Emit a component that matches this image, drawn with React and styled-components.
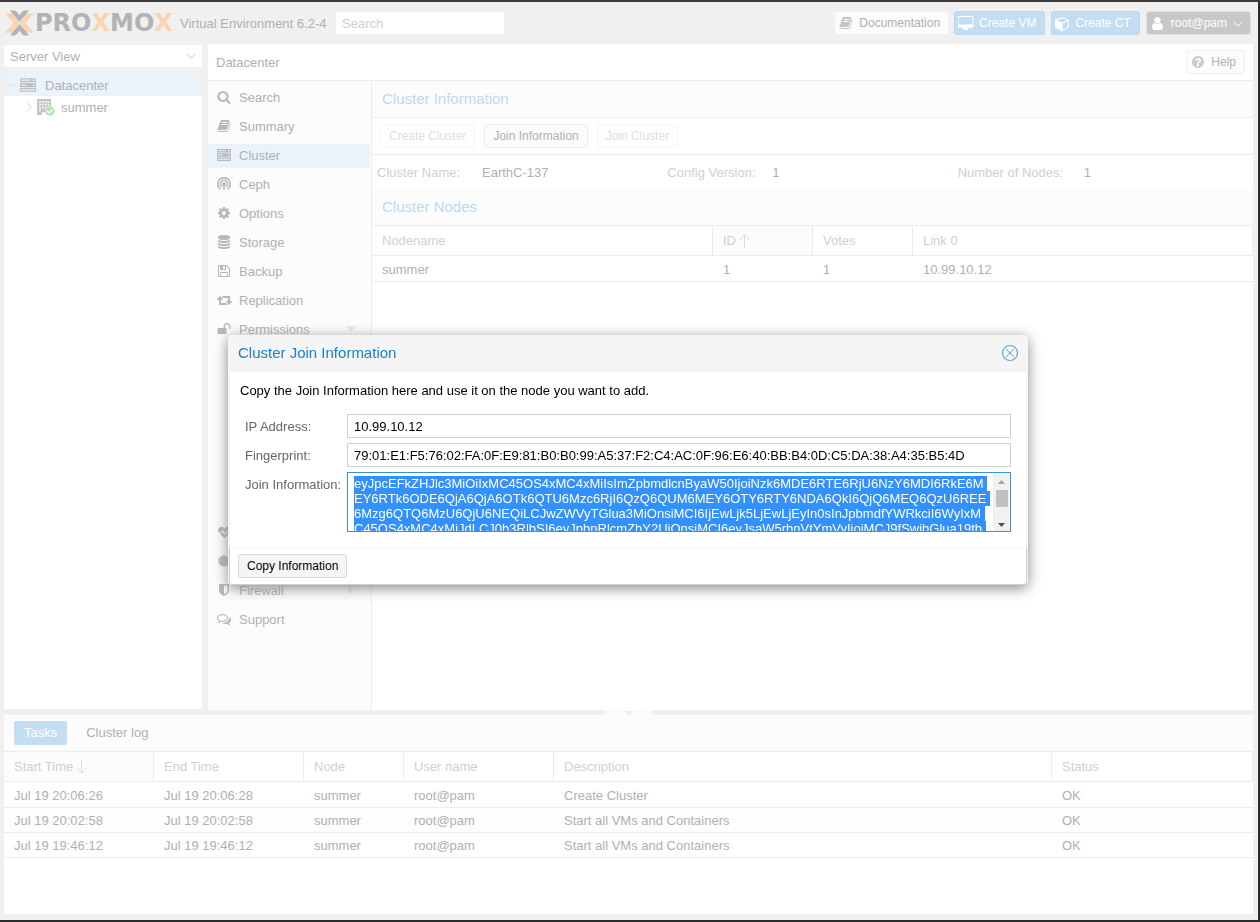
import React, { useEffect, useRef } from "react";
import styled, { createGlobalStyle } from "styled-components";
import { FaCertificate, FaCheckCircle, FaHeartbeat } from "react-icons/fa";

const paths = {
  search:
    "M1216 832q0-185-131.500-316.500t-316.500-131.500-316.500 131.500-131.500 316.500 131.500 316.500 316.500 131.500 316.500-131.500 131.500-316.500zM1728 1664q0 52-38 90t-90 38q-54 0-90-38l-343-342q-179 124-399 124-143 0-273.500-55.500t-225-150-150-225-55.500-273.500 55.500-273.500 150-225 225-150 273.500-55.500 273.500 55.500 225 150 150 225 55.500 273.500q0 220-124 399l343 343q37 37 37 90z",
  book: "M1703 478q40 57 18 129l-275 906q-19 64-76.500 107.500t-122.500 43.500h-923q-77 0-148.500-53.500t-99.500-131.500q-24-67-2-127 0-4 3-27t4-37q1-8-3-21.500t-3-19.500q2-11 8-21t16.500-23.500 16.500-23.500q23-38 45-91.500t30-91.500q3-10 .5-30t-.5-28q3-11 17-28t17-23q21-36 42-92t25-90q1-9-2.500-32t.5-28q4-13 22-30.500t22-22.500q19-26 42.500-84.500t27.500-96.500q1-8-3-25.500t-2-26.500q2-8 9-18t18-23 17-21q8-12 16.500-30.500t15-35 16-36 19.500-32 26.500-23.500 36-11.500 47.500 5.500l-1 3q38-9 51-9h761q74 0 114 56t18 130l-274 906q-36 119-71.500 153.500t-128.500 34.500h-869q-27 0-38 15-11 16-1 43 24 70 144 70h923q29 0 56-15.500t35-41.500l300-987q7-22 5-57 38 15 59 43zm-1064 2q-4 13 2 22.500t20 9.500h608q13 0 25.500-9.500t16.500-22.500l21-64q4-13-2-22.500t-20-9.500h-608q-13 0-25.500 9.500t-16.500 22.500zm-83 256q-4 13 2 22.500t20 9.500h608q13 0 25.500-9.500t16.500-22.500l21-64q4-13-2-22.500t-20-9.500h-608q-13 0-25.500 9.500t-16.500 22.500z",
  server:
    "M0 128h1792v448h-1792zM128 288v128h1024v-128zM1440 256v192h192v-192zM0 672h1792v448h-1792zM128 832v128h640v-128zM1440 800v192h192v-192zM0 1216h1792v448h-1792zM128 1376v128h1280v-128zM1440 1344v192h192v-192z",
  ceph: "M896 0a896 896 0 0 0-500 1640l100-175a690 690 0 1 1 800 0l100 175a896 896 0 0 0-500-1640zM896 350a546 546 0 0 0-330 980l100-165a350 350 0 1 1 460 0l100 165a546 546 0 0 0-330-980zM896 660a240 240 0 0 0-100 458v546h200v-546a240 240 0 0 0-100-458z",
  cog: "M1152 896q0-106-75-181t-181-75-181 75-75 181 75 181 181 75 181-75 75-181zm512-109v222q0 12-8 23t-20 13l-185 28q-19 54-39 91 35 50 107 138 10 12 10 25t-9 23q-27 37-99 108t-94 71q-12 0-26-9l-138-108q-44 23-91 38-16 136-29 186-7 28-36 28h-222q-14 0-24.500-8.500t-11.500-21.500l-28-184q-49-16-90-37l-141 107q-10 9-25 9-14 0-25-11-126-114-165-168-7-10-7-23 0-12 8-23 15-21 51-66.500t54-70.500q-27-50-41-99l-183-27q-13-2-21-12.500t-8-23.500v-222q0-12 8-23t19-13l186-28q14-46 39-92-40-57-107-138-10-12-10-24 0-10 9-23 26-36 98.500-107.500t94.500-71.500q13 0 26 10l138 107q44-23 91-38 16-136 29-186 7-28 36-28h222q14 0 24.500 8.500t11.500 21.500l28 184q49 16 90 37l142-107q9-9 24-9 13 0 25 10 129 119 165 170 7 8 7 22 0 12-8 23-15 21-51 66.500t-54 70.500q26 50 41 98l183 28q13 2 21 12.500t8 23.500z",
  database:
    "M896 768q237 0 443-43t325-127v170q0 69-103 128t-280 93.500-385 34.500-385-34.500-280-93.500-103-128v-170q119 84 325 127t443 43zm0 768q237 0 443-43t325-127v170q0 69-103 128t-280 93.500-385 34.500-385-34.500-280-93.500-103-128v-170q119 84 325 127t443 43zm0-384q237 0 443-43t325-127v170q0 69-103 128t-280 93.500-385 34.500-385-34.500-280-93.500-103-128v-170q119 84 325 127t443 43zm0-1152q208 0 385 34.500t280 93.500 103 128v128q0 69-103 128t-280 93.500-385 34.500-385-34.500-280-93.500-103-128v-128q0-69 103-128t280-93.500 385-34.500z",
  floppy:
    "M512 1536h768v-384h-768v384zm896 0h128v-896q0-14-10-38.500t-20-34.500l-281-281q-10-10-34-20t-39-10v416q0 40-28 68t-68 28h-576q-40 0-68-28t-28-68v-416h-128v1280h128v-416q0-40 28-68t68-28h832q40 0 68 28t28 68v416zm-384-928v-320q0-13-9.500-22.500t-22.500-9.500h-192q-13 0-22.500 9.500t-9.500 22.500v320q0 13 9.500 22.500t22.500 9.500h192q13 0 22.500-9.500t9.500-22.500zm640 32v928q0 40-28 68t-68 28h-1344q-40 0-68-28t-28-68v-1344q0-40 28-68t68-28h928q40 0 88 20t76 48l280 280q28 28 48 76t20 88z",
  retweet:
    "M1280 1504q0 13-9.500 22.500t-22.500 9.500h-960q-8 0-13.500-2t-9-7-5.500-8-3-11.500-1-11.500v-600h-192q-26 0-45-19t-19-45q0-24 15-41l320-384q19-22 49-22t49 22l320 384q15 17 15 41 0 26-19 45t-45 19h-192v384h576q16 0 25 11l160 192q7 10 7 21zm640-416q0 24-15 41l-320 384q-20 23-49 23t-49-23l-320-384q-15-17-15-41 0-26 19-45t45-19h192v-384h-576q-16 0-25-12l-160-192q-7-9-7-20 0-13 9.500-22.500t22.500-9.500h960q8 0 13.500 2t9 7 5.500 8 3 11.500 1 11.500v600h192q26 0 45 19t19 45z",
  unlock:
    "M1728 576v256q0 26-19 45t-45 19h-64q-26 0-45-19t-19-45v-256q0-106-75-181t-181-75-181 75-75 181v192h96q40 0 68 28t28 68v576q0 40-28 68t-68 28h-960q-40 0-68-28t-28-68v-576q0-40 28-68t68-28h672v-192q0-185 131.500-316.500t316.500-131.500 316.500 131.500 131.500 316.500z",
  shield:
    "M1344 960v-640h-448v1137q119-63 213-137 235-184 235-360zm192-768v768q0 86-33.500 170.500t-83 150-118 127.500-126.500 103-121 77.500-89.500 49.500-42.500 20q-12 6-26 6t-26-6q-16-7-42.500-20t-89.500-49.500-121-77.500-126.500-103-118-127.500-83-150-33.500-170.500v-768q0-26 19-45t45-19h1152q26 0 45 19t19 45z",
  comments:
    "M704 384q-153 0-286 52t-211.500 141-78.500 191q0 82 53 158t149 132l97 56-35 84q34-20 62-39l44-31 53 10q78 14 153 14 153 0 286-52t211.500-141 78.500-191-78.500-191-211.500-141-286-52zm0-128q191 0 353.500 68.500t256.500 186.500 94 257-94 257-256.500 186.500-353.500 68.500q-86 0-176-16-124 88-278 128-36 9-86 16h-3q-11 0-20.500-8t-11.500-21q-1-3-1-6.500t.5-6.500 2-6l2.500-5t3.500-5.500 4-5 4.500-5 4-4.500q5-6 23-25t26-29.500 22.500-29 25-38.500 20.500-44q-124-72-195-177t-71-224q0-139 94-257t256.500-186.500 353.500-68.500zm822 1169q10 24 20.500 44t25 38.500 22.500 29 26 29.500 23 25q1 1 4 4.500t4.500 5 4 5 3.500 5.500l2.500 5t2 6 .5 6.500-1 6.500q-3 14-13 22t-22 7q-50-7-86-16-154-40-278-128-90 16-176 16-271 0-472-132 58 4 88 4 161 0 309-45t264-129q125-92 192-212t67-254q0-77-23-152 129 71 204 178t75 230q0 120-71 224.500t-195 176.500z",
  desktop:
    "M1728 992v-832q0-13-9.500-22.500t-22.500-9.500h-1600q-13 0-22.500 9.500t-9.500 22.500v832q0 13 9.500 22.500t22.500 9.500h1600q13 0 22.500-9.500t9.500-22.500zm128-832v1088q0 66-47 113t-113 47h-544q0 37 16 77.500t32 71 16 43.500q0 26-19 45t-45 19h-512q-26 0-45-19t-19-45q0-14 16-44t32-70 16-78h-544q-66 0-113-47t-47-113v-1088q0-66 47-113t113-47h1600q66 0 113 47t47 113z",
  cube: "M896 1629l640-349v-636l-640 233v752zm-64-865l698-254-698-254-698 254zm832-252v768q0 35-18 65t-49 47l-704 384q-28 16-61 16t-61-16l-704-384q-31-17-49-47t-18-65v-768q0-40 23-73t61-47l704-256q22-8 44-8t44 8l704 256q38 14 61 47t23 73z",
  user: "M1536 1399q0 109-62.500 187t-150.500 78h-854q-88 0-150.500-78t-62.500-187q0-85 8.500-160.500t31.500-152 58.500-131 94-89 134.500-34.500q131 128 313 128t313-128q76 0 134.500 34.500t94 89 58.500 131 31.500 152 8.500 160.500zm-256-887q0 159-112.500 271.500t-271.500 112.500-271.500-112.500-112.500-271.500 112.500-271.500 271.500-112.500 271.500 112.500 112.500 271.500z",
  question:
    "M1024 1376v-192q0-14-9-23t-23-9h-192q-14 0-23 9t-9 23v192q0 14 9 23t23 9h192q14 0 23-9t9-23zm256-672q0-88-55.500-163t-138.500-116-170-41q-243 0-371 213-15 24 8 42l132 100q7 6 19 6 16 0 25-12 53-68 86-92 34-24 86-24 48 0 85.500 26t37.500 59q0 38-20 61t-68 45q-63 28-115.500 86.500t-52.500 125.500v36q0 14 9 23t23 9h192q14 0 23-9t9-23q0-19 21.500-49.500t54.500-49.500q32-18 49-28.500t46-35 44.500-48 28-60.500 12.500-81zm384 192q0 209-103 385.500t-279.500 279.500-385.500 103-385.500-103-279.500-279.500-103-385.500 103-385.500 279.500-279.500 385.500-103 385.500 103 279.500 279.500 103 385.500z",
  building:
    "M128 0h1536v1792h-512v-320h-512v320h-512zM352 224v192h192v-192zM672 224v192h192v-192zM992 224v192h192v-192zM1312 224v192h160v-192zM352 544v192h192v-192zM672 544v192h192v-192zM992 544v192h192v-192zM1312 544v192h160v-192zM352 864v192h192v-192zM672 864v192h192v-192zM992 864v192h192v-192zM1312 864v192h160v-192zM352 1184v192h192v-192zM1312 1184v192h160v-192z",
};

const wide = ["retweet", "desktop"];

function Icon({ name, size = 14 }) {
  return (
    <svg
      width={wide.includes(name) ? size + 1 : size}
      height={size}
      viewBox={wide.includes(name) ? "0 0 1920 1792" : "0 0 1792 1792"}
      fill="currentColor"
      fillRule="evenodd"
      aria-hidden="true"
    >
      <path d={paths[name]} />
    </svg>
  );
}

function Line({ d, width = 10, height = 10 }) {
  return (
    <svg
      width={width}
      height={height}
      viewBox={`0 0 ${width} ${height}`}
      fill="none"
      stroke="currentColor"
      aria-hidden="true"
    >
      <path d={d} />
    </svg>
  );
}

const menu = [
  { icon: "search", label: "Search" },
  { icon: "book", label: "Summary" },
  { icon: "server", label: "Cluster", active: true },
  { icon: "ceph", label: "Ceph" },
  { icon: "cog", label: "Options" },
  { icon: "database", label: "Storage" },
  { icon: "floppy", label: "Backup" },
  { icon: "retweet", label: "Replication" },
  { icon: "unlock", label: "Permissions", arrow: "M0 2h10l-5 6z" },
];

// entries below the expanded Permissions group
const lowerMenu = [
  { icon: "heart" },
  { icon: "certificate" },
  { icon: "shield", label: "Firewall", arrow: "M2 0l6 5l-6 5z" },
  { icon: "comments", label: "Support" },
];

const tasks = [
  ["Jul 19 20:06:26", "Jul 19 20:06:28", "summer", "root@pam", "Create Cluster", "OK"],
  ["Jul 19 20:02:58", "Jul 19 20:02:58", "summer", "root@pam", "Start all VMs and Containers", "OK"],
  ["Jul 19 19:46:12", "Jul 19 19:46:12", "summer", "root@pam", "Start all VMs and Containers", "OK"],
];

const joinInfo = [
  "eyJpcEFkZHJlc3MiOiIxMC45OS4xMC4xMiIsImZpbmdlcnByaW50IjoiNzk6MDE6RTE6RjU6NzY6MDI6RkE6M",
  "EY6RTk6ODE6QjA6QjA6OTk6QTU6Mzc6RjI6QzQ6QUM6MEY6OTY6RTY6NDA6QkI6QjQ6MEQ6QzU6REE",
  "6Mzg6QTQ6MzU6QjU6NEQiLCJwZWVyTGlua3MiOnsiMCI6IjEwLjk5LjEwLjEyIn0sInJpbmdfYWRkciI6WyIxM",
  "C45OS4xMC4xMiJdLCJ0b3RlbSI6eyJpbnRlcmZhY2UiOnsiMCI6eyJsaW5rbnVtYmVyIjoiMCJ9fSwibGlua19tb",
  "2RlIjoicGFzc2l2ZSJ9fQ==",
].join("\n");

function MenuIcon({ name }) {
  if (name === "heart") return <FaHeartbeat size={13} />;
  if (name === "certificate") return <FaCertificate size={12} />;
  return <Icon name={name} />;
}

function MenuEntry({ item }) {
  return (
    <MenuItem href="#menu" $active={item.active}>
      <IconSlot>
        <MenuIcon name={item.icon} />
      </IconSlot>
      <span>{item.label}</span>
      {item.arrow && (
        <svg width="10" height="10" fill="#ebebeb">
          <path d={item.arrow} />
        </svg>
      )}
    </MenuItem>
  );
}

function JoinDialog() {
  const area = useRef(null);

  useEffect(() => {
    area.current.focus({ preventScroll: true });
    area.current.select();
    area.current.scrollTop = 0;
  }, []);

  return (
    <Dialog role="dialog" aria-labelledby="join-title">
      <DialogHead>
        <DialogTitle id="join-title">Cluster Join Information</DialogTitle>
        <Close aria-label="Close">
          <svg width="18" height="18" viewBox="0 0 18 18" fill="none" stroke="#62a6d9">
            <circle cx="9" cy="9" r="7.5" strokeWidth="1.2" />
            <path d="M5 5l8 8M13 5l-8 8" />
          </svg>
        </Close>
      </DialogHead>
      <DialogBody>
        <p>Copy the Join Information here and use it on the node you want to add.</p>
        <Field>
          <label htmlFor="ip">IP Address:</label>
          <TextBox id="ip" readOnly value="10.99.10.12" />
        </Field>
        <Field>
          <label htmlFor="fp">Fingerprint:</label>
          <TextBox
            id="fp"
            readOnly
            value="79:01:E1:F5:76:02:FA:0F:E9:81:B0:B0:99:A5:37:F2:C4:AC:0F:96:E6:40:BB:B4:0D:C5:DA:38:A4:35:B5:4D"
          />
        </Field>
        <Field>
          <label htmlFor="info">Join Information:</label>
          <AreaBox>
            <Area id="info" ref={area} readOnly wrap="off" value={joinInfo} />
            <ScrollBar>
              <svg width="7" height="4" fill="#a3a3a3"><path d="M0 4l3.500-4l3.500 4z" /></svg>
              <Thumb />
              <svg width="7" height="4" fill="#505050"><path d="M0 0h7l-3.500 4z" /></svg>
            </ScrollBar>
          </AreaBox>
        </Field>
      </DialogBody>
      <DialogFoot>
        <CopyButton>Copy Information</CopyButton>
      </DialogFoot>
    </Dialog>
  );
}

function App() {
  return (
    <Page>
      <GlobalStyle />
      <Header>
        <Logo>
          <svg width="30" height="26" viewBox="0 0 30 26" aria-hidden="true">
            <path d="M0 3h5q2 0 3 1l7 9l-7 9q-1 1-3 1h-5l9-10zM30 3h-5q-2 0-3 1l-7 9l7 9q1 1 3 1h5l-9-10z" fill="#fad3b1" />
            <path d="M5 0h4q2 0 3 1l3 4l3-4q1-1 3-1h4l-10 12zM5 26h4q2 0 3-1l3-4l3 4q1 1 3 1h4l-10-12z" fill="#b3b3b3" />
          </svg>
          <span>
            PRO<b>X</b>MO<b>X</b>
          </span>
        </Logo>
        <Version>Virtual Environment 6.2-4</Version>
        <SearchBox placeholder="Search" aria-label="Search" />
        <Actions>
          <DocLink href="#docs">
            <Icon name="book" />
            Documentation
          </DocLink>
          <BlueButton>
            <Icon name="desktop" size={15} />
            Create VM
          </BlueButton>
          <BlueButton>
            <Icon name="cube" size={15} />
            Create CT
          </BlueButton>
          <UserButton>
            <Icon name="user" size={15} />
            root@pam
            <Line d="M1 4l4 4l4-4" />
          </UserButton>
        </Actions>
      </Header>

      <Main>
        <Sidebar>
          <ViewPicker>
            <select aria-label="View" defaultValue="server">
              <option value="server">Server View</option>
            </select>
            <Line d="M2 3l4 4l4-4" width={12} />
          </ViewPicker>
          <Tree>
            <TreeRow $active>
              <Line d="M1 3l4 4l4-4" />
              <Icon name="server" size={16} />
              <span>Datacenter</span>
            </TreeRow>
            <TreeRow $nested>
              <Line d="M3 1l4 4l-4 4" />
              <NodeIcon>
                <Icon name="building" size={16} />
                <FaCheckCircle size={10} />
              </NodeIcon>
              <span>summer</span>
            </TreeRow>
          </Tree>
        </Sidebar>

        <Content>
          <ContentHead>
            <span>Datacenter</span>
            <HelpButton>
              <Icon name="question" />
              Help
            </HelpButton>
          </ContentHead>
          <ContentBody>
            <Menu>
              {menu.map((item) => (
                <MenuEntry key={item.icon} item={item} />
              ))}
              <SubMenu />
              {lowerMenu.map((item) => (
                <MenuEntry key={item.icon} item={item} />
              ))}
            </Menu>
            <Panel>
              <PanelTitle>Cluster Information</PanelTitle>
              <Toolbar>
                <ToolButton disabled>Create Cluster</ToolButton>
                <ToolButton>Join Information</ToolButton>
                <ToolButton disabled>Join Cluster</ToolButton>
              </Toolbar>
              <Info>
                <div>
                  <dt>Cluster Name:</dt>
                  <dd>EarthC-137</dd>
                </div>
                <div>
                  <dt>Config Version:</dt>
                  <dd>1</dd>
                </div>
                <InfoWide>
                  <dt>Number of Nodes:</dt>
                  <dd>1</dd>
                </InfoWide>
              </Info>
              <PanelTitle as="h3">Cluster Nodes</PanelTitle>
              <Table>
                <colgroup>
                  <col />
                  <Col $w={100} />
                  <Col $w={100} />
                  <Col $w={340} />
                </colgroup>
                <thead>
                  <tr>
                    <Th>Nodename</Th>
                    <Th $sorted>
                      ID
                      <Line d="M6.500 14V1M2 6l4.500-5l4.500 5" width={13} height={14} />
                    </Th>
                    <Th>Votes</Th>
                    <Th>Link 0</Th>
                  </tr>
                </thead>
                <tbody>
                  <tr>
                    <td>summer</td>
                    <td>1</td>
                    <td>1</td>
                    <td>10.99.10.12</td>
                  </tr>
                </tbody>
              </Table>
            </Panel>
          </ContentBody>
        </Content>
      </Main>

      <Splitter>
        <Handle>
          <svg width="8" height="4" fill="#ececec"><path d="M0 0h8l-4 4z" /></svg>
        </Handle>
      </Splitter>

      <Log>
        <Tabs>
          <Tab $active>Tasks</Tab>
          <Tab>Cluster log</Tab>
        </Tabs>
        <Table>
          <colgroup>
            <Col $w={150} />
            <Col $w={150} />
            <Col $w={100} />
            <Col $w={150} />
            <col />
            <Col $w={201} />
          </colgroup>
          <thead>
            <tr>
              <Th $sorted>
                Start Time
                <Line d="M6.500 0v13M2 8l4.500 5l4.500-5" width={13} height={14} />
              </Th>
              <Th>End Time</Th>
              <Th>Node</Th>
              <Th>User name</Th>
              <Th>Description</Th>
              <Th>Status</Th>
            </tr>
          </thead>
          <tbody>
            {tasks.map((row) => (
              <tr key={row[0]}>
                {row.map((cell, i) => (
                  <td key={i}>{cell}</td>
                ))}
              </tr>
            ))}
          </tbody>
        </Table>
      </Log>

      <Overlay>
        <JoinDialog />
      </Overlay>
    </Page>
  );
}

export default App;

const GlobalStyle = createGlobalStyle`
  * {
    box-sizing: border-box;
  }
  body {
    margin: 0;
    background: #f0f0f0;
    font-family: "Liberation Sans", Arial, Helvetica, sans-serif;
    font-size: 13px;
    color: #b0b0b0;
  }
  button, input, select, textarea {
    font: inherit;
    color: inherit;
    margin: 0;
  }
  a {
    color: inherit;
    text-decoration: none;
  }
  svg {
    flex: none;
  }
`;

const Page = styled.div`
  display: flex;
  flex-direction: column;
  min-height: 100vh;
  border: 2px solid #2b2b2d;
  border-top-color: #3d3a3b;
  border-left: none;
  background: #f0f0f0;
`;

const Header = styled.header`
  display: flex;
  align-items: center;
  height: 42px;
  padding: 0 7px 0 5px;
`;
const Logo = styled.div`
  display: flex;
  align-items: center;
  gap: 1px;
  width: 175px;
  svg {
    width: 29px;
  }
  span {
    font: bold 24px/26px "DejaVu Sans", sans-serif;
    color: #b3b3b3;
  }
  b {
    color: #fad3b1;
  }
`;
const Version = styled.span`
  width: 156px;
  font-size: 13px;
  white-space: nowrap;
`;
const SearchBox = styled.input`
  width: 168px;
  height: 22px;
  padding: 0 6px;
  border: none;
  background: #fff;
  &::placeholder {
    color: #d0d0d0;
  }
`;
const Actions = styled.div`
  display: flex;
  align-items: center;
  gap: 6px;
  margin-left: auto;
`;
const DocLink = styled.a`
  display: flex;
  align-items: center;
  gap: 6px;
  height: 22px;
  padding: 0 8px 0 4px;
  border-radius: 2px;
  background: #fcfcfc;
  font-size: 12px;
  svg {
    color: #c4c4c4;
  }
`;
const BlueButton = styled.button`
  display: flex;
  align-items: center;
  gap: 5px;
  height: 24px;
  padding: 0 8px 0 3px;
  border: 1px solid #b8d8ef;
  border-radius: 3px;
  background: #c3def2;
  color: #fff;
  font-size: 12px;
`;
const UserButton = styled(BlueButton)`
  gap: 6px;
  padding: 0 7px 0 3px;
  border-color: #e2e2e2;
  background: #c8c8c8;
`;

const Main = styled.main`
  display: flex;
  flex: 1;
  gap: 6px;
  padding: 0 5px 0 4px;
`;
const Sidebar = styled.aside`
  display: flex;
  flex-direction: column;
  gap: 7px;
  width: 198px;
  padding: 1px 0;
`;
const ViewPicker = styled.div`
  display: flex;
  align-items: center;
  height: 22px;
  padding: 0 5px 0 6px;
  background: #fff;
  color: #d0d0d0;
  select {
    flex: 1;
    padding: 0;
    border: none;
    background: none;
    color: #b0b0b0;
    appearance: none;
  }
`;
const Tree = styled.div`
  flex: 1;
  background: #fff;
`;
const TreeRow = styled.div`
  display: flex;
  align-items: center;
  gap: 6px;
  height: 22px;
  padding-left: ${(p) => (p.$nested ? 20 : 4)}px;
  background: ${(p) => (p.$active ? "#ebf3fa" : "transparent")};
  > svg:first-child {
    margin-right: -4px;
    color: #dcdcdc;
  }
  > svg {
    color: #c0c0c0;
  }
  span {
    margin-left: ${(p) => (p.$nested ? 0 : 3)}px;
  }
`;
const NodeIcon = styled.i`
  position: relative;
  display: flex;
  width: 19px;
  color: #c6c0c0;
  svg:last-child {
    position: absolute;
    right: 0;
    bottom: -1px;
    border-radius: 5px;
    background: #fff;
    color: #b3e6b9;
  }
`;

const Content = styled.section`
  display: flex;
  flex: 1;
  flex-direction: column;
  background: #fff;
`;
const ContentHead = styled.div`
  display: flex;
  align-items: center;
  justify-content: space-between;
  height: 37px;
  padding: 0 8px;
  border-bottom: 1px solid #ececec;
`;
const HelpButton = styled.button`
  display: flex;
  align-items: center;
  gap: 6px;
  height: 24px;
  padding: 0 8px 0 4px;
  border: 1px solid #efefef;
  border-radius: 3px;
  background: #fcfcfc;
  font-size: 12px;
  svg {
    color: #cccccc;
  }
`;
const ContentBody = styled.div`
  display: flex;
  flex: 1;
`;
const Menu = styled.nav`
  display: flex;
  flex-direction: column;
  gap: 5px;
  width: 164px;
  padding: 5px 1px 0 0;
  border-right: 1px solid #ececec;
  background: #fcfcfc;
`;
const MenuItem = styled.a`
  display: flex;
  align-items: center;
  height: 24px;
  padding: 0 14px 2px 8px;
  background: ${(p) => (p.$active ? "#ebf3fa" : "transparent")};
  > span {
    flex: 1;
  }
`;
const SubMenu = styled.div`
  height: 169px;
`;
const IconSlot = styled.i`
  display: flex;
  justify-content: center;
  width: 16px;
  margin-right: 7px;
  color: #b8b8b8;
`;

const Panel = styled.div`
  flex: 1;
`;
const PanelTitle = styled.h2`
  display: flex;
  align-items: center;
  height: 37px;
  margin: 0;
  padding: 0 10px 2px;
  border-bottom: 1px solid #ececec;
  background: #fcfcfc;
  color: #bcdaf0;
  font-size: 15px;
  font-weight: normal;
`;
const Toolbar = styled.div`
  display: flex;
  align-items: center;
  gap: 9px;
  height: 37px;
  padding: 0 8px;
  border-bottom: 1px solid #ececec;
`;
const ToolButton = styled.button`
  height: 24px;
  padding: 0 8px;
  border: 1px solid #ececec;
  border-radius: 3px;
  background: #fcfcfc;
  font-size: 12px;
  &:disabled {
    border-color: #f5f5f5;
    background: #fefefe;
    color: #dedede;
  }
`;
const Info = styled.dl`
  display: grid;
  grid-template-columns: repeat(3, 1fr);
  align-items: center;
  height: 34px;
  margin: 0;
  padding: 0 5px;
  div {
    display: flex;
  }
  dt {
    width: 105px;
    color: #d0d0d0;
  }
  dd {
    margin: 0;
  }
`;
const InfoWide = styled.div`
  && dt {
    width: 126px;
  }
`;

const Table = styled.table`
  width: 100%;
  border-collapse: separate;
  border-spacing: 0;
  table-layout: fixed;
  td {
    height: 25px;
    padding: 0 10px;
    border-bottom: 1px solid #ececec;
  }
  tbody tr:first-child td {
    height: 26px;
    padding-top: 1px;
  }
  tbody tr:nth-child(even) {
    background: #fdfdfd;
  }
`;
const Col = styled.col`
  width: ${(p) => p.$w}px;
`;
const Th = styled.th`
  height: 30px;
  padding: 0 10px;
  border-right: 1px solid #ececec;
  border-bottom: 1px solid #ececec;
  background: ${(p) => (p.$sorted ? "#fafcfe" : "#fff")};
  color: #d0d0d0;
  font-weight: normal;
  text-align: left;
  svg {
    margin-left: 2px;
    vertical-align: middle;
    color: #dcdcdc;
  }
`;

const Splitter = styled.div`
  display: flex;
  justify-content: center;
  height: 5px;
`;
const Handle = styled.div`
  display: flex;
  align-items: center;
  justify-content: center;
  width: 48px;
  background: #fafafa;
`;
const Log = styled.section`
  height: 199px;
  margin: 0 5px 6px 4px;
  background: #fff;
`;
const Tabs = styled.div`
  display: flex;
  align-items: center;
  gap: 9px;
  height: 37px;
  padding: 0 10px;
  border-bottom: 1px solid #ececec;
  background: #fcfcfc;
`;
const Tab = styled.button`
  height: 24px;
  padding: 0 10px 2px;
  border: none;
  border-radius: 2px;
  background: ${(p) => (p.$active ? "#c3def2" : "transparent")};
  color: ${(p) => (p.$active ? "#fff" : "inherit")};
`;

const Overlay = styled.div`
  position: fixed;
  inset: 0;
  display: flex;
  align-items: center;
  justify-content: center;
  padding: 0 4px 2px 0;
`;
const Dialog = styled.div`
  width: 800px;
  border-radius: 4px;
  background: #f5f5f5;
  box-shadow: 0 3px 14px #888;
  color: #000;
`;
const DialogHead = styled.div`
  display: flex;
  align-items: center;
  justify-content: space-between;
  height: 37px;
  padding: 0 9px 2px 10px;
`;
const DialogTitle = styled.h1`
  margin: 0;
  color: #157fcc;
  font-size: 15px;
  font-weight: normal;
`;
const Close = styled.button`
  display: flex;
  padding: 0;
  border: none;
  background: none;
`;
const DialogBody = styled.div`
  margin: 0 2px;
  padding: 10px 15px;
  background: #fff;
  p {
    margin: 0 -5px 15px;
    line-height: 17px;
  }
`;
const Field = styled.div`
  display: flex;
  margin-bottom: 5px;
  color: #000;
  label {
    width: 102px;
    padding-top: 5px;
    color: #666;
    line-height: 15px;
    white-space: nowrap;
  }
`;
const TextBox = styled.input`
  flex: 1;
  height: 24px;
  padding: 0 6px;
  border: 1px solid #cfcfcf;
  background: #fff;
`;
const AreaBox = styled.div`
  display: flex;
  flex: 1;
  height: 60px;
  border: 1px solid #3892d4;
`;
const Area = styled.textarea`
  flex: 1;
  padding: 3px 0 0 6px;
  border: none;
  outline: none;
  overflow: hidden;
  resize: none;
  background: #fff;
  line-height: 15px;
  &::selection {
    background: #3390ff;
    color: #fff;
  }
`;
const ScrollBar = styled.div`
  display: flex;
  flex-direction: column;
  align-items: center;
  justify-content: space-between;
  width: 17px;
  padding: 7px 0 4px;
  background: #f1f1f1;
`;
const Thumb = styled.div`
  width: 12px;
  height: 17px;
  margin-bottom: 11px;
  background: #c1c1c1;
`;
const DialogFoot = styled.div`
  display: flex;
  align-items: center;
  height: 38px;
  margin: 0 1px;
  padding: 0 8px;
  border: 1px solid #cfcfcf;
  border-top-color: #f5f5f5;
  border-radius: 0 0 3px 3px;
  background: #fff;
`;
const CopyButton = styled.button`
  height: 24px;
  padding: 0 8px;
  border: 1px solid #d8d8d8;
  border-radius: 3px;
  background: #f5f5f5;
  font-size: 12px;
`;
